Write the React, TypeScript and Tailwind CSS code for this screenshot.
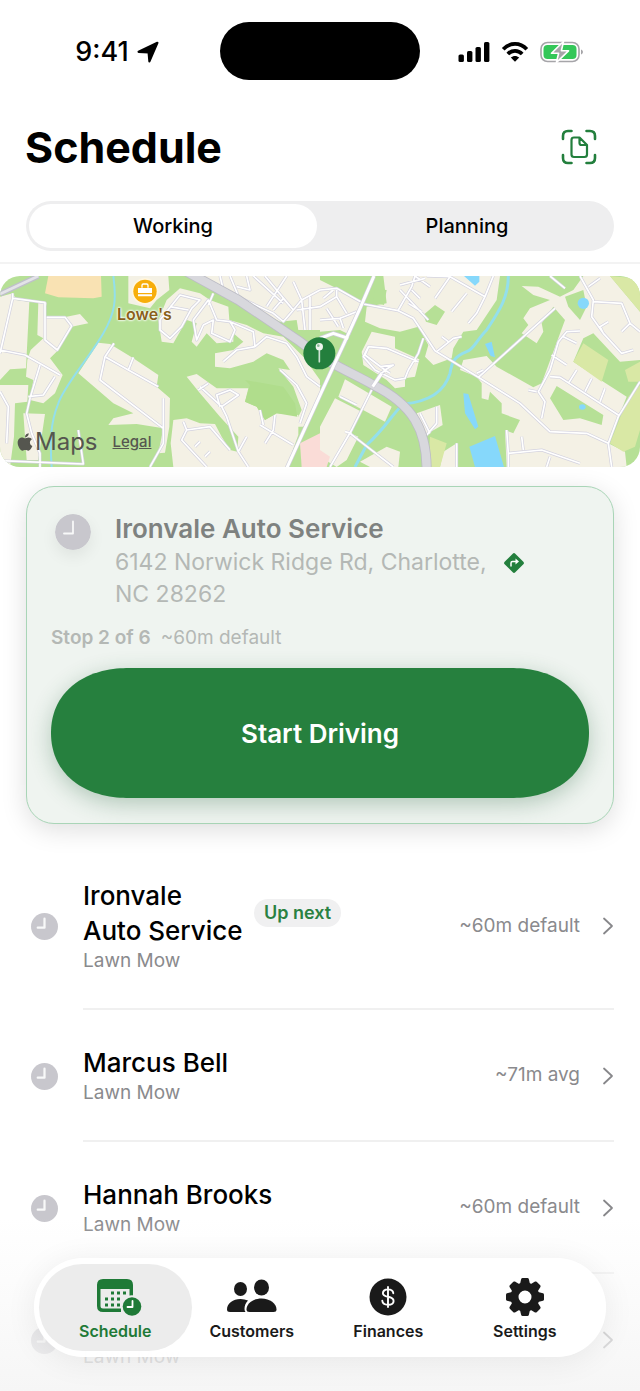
import { FaApple } from "react-icons/fa";

const stops = [
  { id: 2, name: "Ironvale Auto Service", job: "Lawn Mow", time: "~60m default", next: true },
  { id: 3, name: "Marcus Bell", job: "Lawn Mow", time: "~71m avg" },
  { id: 4, name: "Hannah Brooks", job: "Lawn Mow", time: "~60m default" },
  { id: 5, name: "", job: "Lawn Mow", time: "" },
];

function ClockIcon({ className, stroke }: { className: string; stroke: number }) {
  return (
    <svg viewBox="0 0 36 36" className={className} aria-hidden="true">
      <circle cx="18" cy="18" r="18" fill="#c8c7cd" />
      <path d="M18 7.5V19.5H9" fill="none" stroke="#f8f9f9" strokeWidth={stroke} strokeLinecap="round" strokeLinejoin="round" />
    </svg>
  );
}

function StatusBar() {
  return (
    <div className="grid h-20 grid-cols-[1fr_auto_1fr] items-center pt-[22px]">
      <div className="flex items-center justify-center gap-2 pt-[2px] pl-[14px]">
        <span className="text-[27px] font-medium leading-8">9:41</span>
        <svg viewBox="0 0 22 22" className="size-[22px]" aria-hidden="true">
          <path d="M20.4 1.8 12.4 20.4 11.6 11.4 1.6 10.8Z" stroke="#000" strokeWidth="2.2" strokeLinejoin="round" />
        </svg>
      </div>
      <div className="h-[58px] w-[200px] rounded-full bg-black" />
      <div className="flex items-center justify-center gap-[11px] pt-[2px] pr-[18px]">
        <svg viewBox="0 0 32 20" className="h-5 w-8" aria-hidden="true">
          <rect x="0.5" y="12.5" width="5.4" height="7.5" rx="1.6" />
          <rect x="9" y="9" width="5.4" height="11" rx="1.6" />
          <rect x="17.5" y="5" width="5.4" height="15" rx="1.6" />
          <rect x="26" y="0" width="5.4" height="20" rx="1.6" />
        </svg>
        <svg viewBox="0 0 28 20" className="h-5 w-[28px]" fill="none" stroke="#000" aria-hidden="true">
          <path d="M2.2 7.3C9 .1 19 .1 25.8 7.3" strokeWidth="3.8" />
          <path d="M6.8 12C11 7.8 17 7.8 21.2 12" strokeWidth="3.8" />
          <path d="M14 19.8 9.8 15.6C12.2 13.4 15.8 13.4 18.2 15.6Z" fill="#000" stroke="none" />
        </svg>
        <svg viewBox="0 0 44 22" className="h-[22px] w-11" aria-hidden="true">
          <rect x="1" y="1.5" width="38" height="19" rx="6.5" fill="none" stroke="#a6a5a9" strokeWidth="1.6" />
          <rect x="3.5" y="4" width="33" height="14" rx="4" fill="#34c759" />
          <path d="M41 8.5C43.6 9.2 43.6 12.8 41 13.5Z" fill="#a6a5a9" />
          <path d="M23.5 0.5 11.5 12.2H18.6L16.4 21.5 28.5 9.8H21.4Z" fill="#a6a5a9" stroke="#fff" strokeWidth="1.6" strokeLinejoin="round" />
        </svg>
      </div>
    </div>
  );
}

const creamWest = [
  "M0 80L38 70L50 90L88 95L78 295L30 298L0 330Z",
  "M0 345L85 345L82 395L45 400L42 500L30 591H0Z",
  "M70 430L135 432L125 500L115 570H80Z",
  "M115 95L140 98L132 140L200 140L240 132L265 160L215 170L175 240L150 265L188 315L165 370L130 400L90 390L100 330L78 320L82 270L92 240L130 205L112 195Z",
  "M385 18H505L508 60L470 90L450 115L385 100Z",
  "M475 150L500 90L540 55L600 70L630 90L685 110L688 150L740 165L790 190L850 200L910 260L960 330V380L910 470H880L905 420L880 350L835 295L870 300L850 270L800 250L760 275L690 295L645 290V250L700 240L730 215L700 190V215L650 220L620 190L590 230L575 215L590 160L560 150L520 220L485 215Z",
  "M295 218L330 222L400 265L475 315L470 350L510 385L508 470L495 548L475 550L490 475L410 462L325 465L340 445L400 430L340 400L235 310Z",
  "M560 320L590 312L650 355H745L735 395L770 410L795 450L830 430L895 435V495L860 591H520L512 520L520 450L560 445L600 460L645 462L665 500L690 540L712 545L715 500L660 440L600 370Z",
  "M570 18H960V180H895L890 150L840 155L700 85Z",
];

const creamEast = [
  "M0 30L60 60L130 95L90 195L60 180L0 185Z",
  "M190 18H540L530 90L470 180L430 185L400 235L395 265L340 285L315 260L325 225L295 170L240 185L180 175L135 155L140 110L200 100Z",
  "M155 185L225 200V235L298 268L285 320L255 325V350L225 355L200 330L130 285L125 245Z",
  "M75 328L215 410L195 455L55 380Z",
  "M45 385L125 425L90 490L115 500L80 570L50 591L0 560V470Z",
  "M430 270L500 258L530 290L640 352L665 340L735 150L700 110L665 160L670 185L650 220L605 190L625 165L610 145L630 115L690 90L640 75L605 48L655 50L720 80L760 60L790 18H870L960 125V270L900 275L820 190L790 205L760 275L850 335L920 380L865 520L915 545L920 591H560L555 480L580 490L600 450L545 430V400L510 365L505 390L485 385V340L470 320L420 300Z",
  "M290 430L360 405L368 465L315 495Z",
  "M370 545L410 520V591H360Z",
  "M120 575L200 530L240 545L235 591H150Z",
];

const roadsWest = [
  "M0 250L38 85V70M40 85L135 98V210L172 240L215 168L195 142H140M0 240L75 255L180 315M120 285L90 385L80 430L95 490L120 550V591",
  "M0 365L25 410L20 520M85 380L130 375L165 320M0 572L250 582L235 480",
  "M342 220L315 260L300 330L490 475M318 262L385 300L475 350M385 300L400 262M490 385V520L450 591",
  "M480 150L540 75L600 90L575 115L545 170L510 205L480 180ZM510 110L565 120M625 90L580 150L590 210L610 165L640 150L635 190L690 215L705 180L690 155L650 150ZM640 70L625 105",
  "M690 155L760 185L765 230L710 240L670 275M765 230L800 200L860 220L890 260L920 320L960 350M890 345L920 400L900 460M840 300L890 345",
  "M595 360L625 340M600 350L665 410L680 440L715 545M660 410L650 375L690 360L715 375L665 410M690 540L630 470L560 480L545 510L620 591M560 480L550 455M585 530L600 515M615 560L630 545M715 545L745 591M715 545L740 500M780 465L880 525M795 520L820 480L825 435M780 420L790 465",
  "M660 18L670 60L820 130L850 155L880 120L905 90L960 60M690 18L720 90M740 18L750 60L710 50M760 18L850 100M860 18L800 110M795 18L880 120M890 120L960 110M905 90L915 180M880 35L905 90M930 80V180M820 120L850 85L880 120",
];

const roadsEast = [
  "M0 60L50 55L130 100M10 85L40 60M0 110L50 80L80 130M0 150L60 145L110 125M50 80V60M60 145L70 175M20 115L55 170",
  "M130 102L235 122L280 145L345 242L475 322L600 400L690 485L800 490L865 520L875 591M865 520L895 440L960 335",
  "M235 120L275 50L285 18M265 100L305 125M275 60L300 85M285 18L330 50M240 45L315 25M320 18L390 20L495 80L520 18M390 20L345 85M495 80L470 130L445 160M440 70L395 125M325 150L240 60",
  "M310 205L295 250L265 300L255 325L225 330L165 300L130 260L145 230L200 235L295 275M145 232L135 255L195 300L220 285L180 290M175 320L195 300L210 310M350 245L400 205L425 200M365 200L385 215",
  "M160 350L95 480L30 591M90 490L220 591M75 485L95 490M60 380L110 405M300 430L330 490M350 410V460L320 495",
  "M475 322L705 115M470 310L490 300M665 445L675 395L655 365L690 300L715 215L740 185L780 183M730 200L770 220M695 255L740 285M690 320L720 322L895 435M770 300L745 340M815 325L795 365M855 355L840 395M650 365L625 360",
  "M780 18L820 90L815 140L850 190L905 250L940 240M820 95L905 100L930 160L960 185M850 190L840 170L865 155M930 160L905 185M805 50L840 25M690 18L735 55",
  "M560 480L565 550L665 540L780 580M605 500L610 540M565 550V591M690 560L680 591M410 520V591",
];

function RouteMap() {
  return (
    <svg viewBox="0 18 1920 573" preserveAspectRatio="xMidYMid slice" className="block h-full w-full" aria-hidden="true">
      <rect y="18" width="1920" height="573" fill="#b6e096" />
      <g fill="#f4f1e5">
        {creamWest.map((d) => <path key={d} d={d} />)}
      </g>
      <path d="M145 18H303L305 80L280 85L175 82L135 70Z" fill="#f9e2b3" />
      <path d="M735 395L750 345L735 330L850 350L885 400L892 440L830 430L795 450L770 410Z" fill="#b0dd8c" />
      <path d="M900 520L960 490V591H905Z" fill="#fadcd7" />
      <g transform="translate(960 0)">
        <g fill="#f4f1e5">
          {creamEast.map((d) => <path key={d} d={d} />)}
        </g>
        <path d="M0 540L30 560L20 591H0Z" fill="#fadcd7" />
        <path d="M165 57L200 60L192 105L160 98ZM310 135L345 105L375 125L350 165L318 155ZM710 348L850 435L845 465L780 445L730 450L690 385Z" fill="#b6e096" />
        <path d="M735 80L790 60L800 110L780 150L745 110Z" fill="#b6e096" />
        <path d="M870 18L945 25L960 60V125ZM790 220L865 270L845 335L760 275ZM960 345L925 380L870 520L910 545L945 530L960 480ZM915 300L960 275V335L925 335ZM330 500L380 520L360 591H325Z" fill="#d9e8a5" />
        <path d="M565 18C565 80 540 120 500 180C470 210 460 240 440 245C400 260 395 280 390 310C375 360 330 395 250 402C210 440 200 470 140 525L105 591" fill="none" stroke="#93dfec" strokeWidth="9" />
        <g fill="#86d8fb">
          <path d="M432 18H478V35L465 47ZM495 222L515 215L525 262L512 258ZM430 370L445 372L475 470L465 478L435 430ZM448 530L525 498L552 591H465Z" />
          <circle cx="790" cy="100" r="17" />
          <ellipse cx="787" cy="411" rx="10" ry="8" />
        </g>
      </g>
      <path d="M340 18C350 90 345 130 310 190C270 260 190 350 175 400C150 460 150 520 155 591" fill="none" stroke="#93dfec" strokeWidth="6" />
      <g fill="none" strokeLinejoin="round">
        <path d={roadsWest.join("")} stroke="#d3d2df" strokeWidth="9" />
        <path d={roadsEast.join("")} stroke="#d3d2df" strokeWidth="9" transform="translate(960 0)" />
        <path d={roadsWest.join("")} stroke="#fff" strokeWidth="5" />
        <path d={roadsEast.join("")} stroke="#fff" strokeWidth="5" transform="translate(960 0)" />
        <path d="M0 72L115 18" stroke="#bfc0c9" strokeWidth="16" />
        <path d="M0 72L115 18" stroke="#e3e3e8" strokeWidth="8" />
        <path d="M560 5L715 90L900 215C990 285 1060 310 1120 345C1240 405 1280 480 1280 600" stroke="#bcbcc5" strokeWidth="30" />
        <path d="M560 5L715 90L900 215C990 285 1060 310 1120 345C1240 405 1280 480 1280 600" stroke="#d8d8dd" strokeWidth="25" />
        <path d="M1122 18L1080 115L1030 225L965 365L860 595M1118 350L1145 310M960 205L1000 190L1045 205" stroke="#cfceda" strokeWidth="13" />
        <path d="M1122 18L1080 115L1030 225L965 365L860 595M1118 350L1145 310M960 205L1000 190L1045 205" stroke="#fff" strokeWidth="9" />
      </g>
      <circle cx="435" cy="64" r="40" fill="#fff6df" />
      <circle cx="435" cy="64" r="35" fill="#f7ae0b" />
      <path d="M414 54H456V69H414ZM414 73H456V79H414Z" fill="#fff" />
      <path d="M426 53V46Q426 42 430 42H440Q444 42 444 46V53" fill="none" stroke="#fff" strokeWidth="4" />
      <circle cx="958" cy="250" r="48" fill="#237f3d" />
      <path d="M958 236V275" stroke="#cfe3d4" strokeWidth="5" strokeLinecap="round" />
      <circle cx="958" cy="230" r="11" fill="#eef5ef" />
      <circle cx="955" cy="227" r="4" fill="#8dba9a" />
    </svg>
  );
}

function ScheduleIcon() {
  return (
    <svg viewBox="-7 0 53 38" className="h-[38px] w-[53px]" fill="#1f7a37" aria-hidden="true">
      <path d="M7 1H31Q37 1 37 7V22H33.5V11H4.5V28Q4.5 30.5 7 30.5H25V34H7Q1 34 1 28V7Q1 1 7 1Z" />
      <path d="M15 13.5h3v3h-3zM21 13.5h3v3h-3zM27 13.5h3v3h-3zM9 19.5h3v3h-3zM15 19.5h3v3h-3zM21 19.5h3v3h-3zM9 25.5h3v3h-3zM15 25.5h3v3h-3zM21 25.5h3v3h-3z" />
      <circle cx="36" cy="28.5" r="11.2" fill="#ececec" />
      <circle cx="36" cy="28.5" r="9.3" />
      <path d="M36.5 23V29H31.5" fill="none" stroke="#fff" strokeWidth="1.8" strokeLinecap="round" strokeLinejoin="round" />
    </svg>
  );
}

function CustomersIcon() {
  return (
    <svg viewBox="0 0 50 38" className="h-[38px] w-[50px]" fill="#1a1a1a" aria-hidden="true">
      <ellipse cx="13.5" cy="11" rx="6.5" ry="7" />
      <path d="M3 34Q0 34 0 31.5C0 25.5 6 21 13.5 21Q17.5 21 21 22.5C18.5 25 17.5 28 17.5 31Q17.5 33 18.5 34Z" />
      <ellipse cx="34.5" cy="9.5" rx="7.5" ry="8" />
      <path d="M22.5 34Q19.5 34 19.5 31.5C19.5 25.5 26 20.5 34.5 20.5S49.5 25.5 49.5 31.5Q49.5 34 46.5 34Z" />
    </svg>
  );
}

function FinancesIcon() {
  return (
    <svg viewBox="0 0 38 38" className="size-[38px]" aria-hidden="true">
      <circle cx="19" cy="19" r="18.5" fill="#1a1a1a" />
      <path d="M24.3 15.2C24 12.7 22 11.4 19 11.4S13.9 12.9 13.9 15.2C13.9 20.3 24.6 17.2 24.6 22.9C24.6 25.3 22.2 26.7 19 26.7S13.5 25.3 13.3 22.7M19 9V29" fill="none" stroke="#fff" strokeWidth="1.9" strokeLinecap="round" />
    </svg>
  );
}

function SettingsIcon() {
  return (
    <svg viewBox="-19 -19 38 38" className="size-[38px]" aria-hidden="true">
      {[0, 45, 90, 135, 180, 225, 270, 315].map((angle) => (
        <path key={angle} d="M-5.5-11L-3.8-18Q-3.5-19-2.5-19H2.5Q3.5-19 3.8-18L5.5-11Z" fill="#1a1a1a" transform={`rotate(${angle})`} />
      ))}
      <circle r="10.5" fill="none" stroke="#1a1a1a" strokeWidth="8" />
    </svg>
  );
}

const tabs = [
  { label: "Schedule", icon: <ScheduleIcon />, active: true },
  { label: "Customers", icon: <CustomersIcon /> },
  { label: "Finances", icon: <FinancesIcon /> },
  { label: "Settings", icon: <SettingsIcon /> },
];

export default function App() {
  return (
    <div className="relative h-screen overflow-hidden bg-white font-['Inter',sans-serif] text-black">
      {/* HEADER */}
      <header className="border-b-2 border-[#f3f3f3] pb-[11px]">
        <StatusBar />
        <div className="mt-10 flex h-[54px] items-center justify-between pr-[43px] pl-[25px]">
          <h1 className="text-[43px] font-bold leading-[54px]">Schedule</h1>
          <button type="button" aria-label="Scan document">
            <svg viewBox="0 0 36 36" className="size-9" fill="none" stroke="#237f3d" strokeWidth="2.6" strokeLinecap="round" strokeLinejoin="round" aria-hidden="true">
              <path d="M2 10V7Q2 2 7 2H10.5M25.5 2H29Q34 2 34 7V10M34 26V29Q34 34 29 34H25.5M10.5 34H7Q2 34 2 29V26" />
              <path d="M13 8.5H18.5L26 16V25.5Q26 28 23.5 28H13Q10.5 28 10.5 25.5V11Q10.5 8.5 13 8.5ZM18.5 8.5V14Q18.5 16 20.5 16H26" strokeWidth="2.2" />
            </svg>
          </button>
        </div>
        <div className="mx-[26px] mt-[27px] flex h-[50px] rounded-full bg-[#eeeeef] text-[20px] font-medium">
          <button type="button" className="m-[3px] flex-1 rounded-full bg-white">Working</button>
          <button type="button" className="m-[3px] flex-1 rounded-full">Planning</button>
        </div>
      </header>

      <main>
        {/* MAP */}
        <section className="relative mt-3 h-[191px] overflow-hidden rounded-[20px]">
          <RouteMap />
          <span className="absolute top-7 left-[117px] text-[16px] font-semibold leading-5 text-[#896019] [text-shadow:0_0_2px_#fff,0_0_2px_#fff,0_0_3px_#fff]">
            Lowe's
          </span>
          <div className="absolute bottom-[9px] left-[15px] flex items-center gap-[15px] text-[#55564f]">
            <span className="flex items-center text-[24px] leading-8">
              <FaApple className="size-5" />
              Maps
            </span>
            <a href="#legal" className="text-[15px] font-medium leading-5 underline">Legal</a>
          </div>
        </section>

        {/* CURRENT STOP */}
        <section className="mx-[26px] mt-[19px] rounded-[28px] border border-[#a9d5b7] bg-[#eff4f0] px-6 py-[25px] shadow-[0_6px_26px_rgba(0,0,0,0.13)]">
          <div className="flex gap-6 pl-1">
            <ClockIcon className="mt-[2px] size-9 rounded-full shadow-[0_6px_16px_rgba(0,0,0,0.07)]" stroke={1.8} />
            <div>
              <h2 className="text-[26px] font-semibold leading-[34px] text-[#7e8280]">Ironvale Auto Service</h2>
              <div className="flex items-start gap-4 text-[23px] leading-8 text-[#b4b8b5]">
                <p>6142 Norwick Ridge Rd, Charlotte,<br />NC 28262</p>
                <button type="button" aria-label="Directions" className="mt-[6px]">
                  <svg viewBox="0 0 22 22" className="size-[22px]" aria-hidden="true">
                    <rect x="3.5" y="3.5" width="15" height="15" rx="1.8" fill="#237f3d" transform="rotate(45 11 11)" />
                    <path d="M8 14.5V11Q8 9.5 9.5 9.5H13" fill="none" stroke="#fff" strokeWidth="1.5" />
                    <path d="M12.5 6.5L16 9.5L12.5 12.5Z" fill="#fff" />
                  </svg>
                </button>
              </div>
            </div>
          </div>
          <p className="mt-4 text-[19px] leading-6 text-[#b4b8b5]">
            <span className="mr-[10px] font-semibold">Stop 2 of 6</span>
            ~60m default
          </p>
          <button type="button" className="mt-[18px] h-[130px] w-full rounded-[78px/65px] bg-[#26803e] text-[26px] font-semibold text-white shadow-[0_6px_22px_rgba(38,100,60,0.3)] [corner-shape:superellipse(1.12)]">
            Start Driving
          </button>
        </section>

        {/* STOPS */}
        <ul className="mt-[19px] pr-[26px] pl-[31px]">
          {stops.map((stop) => (
            <li key={stop.id}>
              <button type="button" className="flex w-full items-center gap-[25px] text-left">
                <ClockIcon className="size-[27px] shrink-0" stroke={3} />
                <span className="flex flex-1 items-center border-b-2 border-[#f0f0f0] pt-[35px] pb-[34px]">
                  <span className="flex-1">
                    <span className="flex min-h-[35px] items-center gap-[10px]">
                      <span className={stop.next ? "max-w-[161px] text-[26px] font-medium leading-[35px]" : "text-[26px] font-medium leading-[35px]"}>
                        {stop.name}
                      </span>
                      {stop.next && (
                        <span className="rounded-full bg-[#f0f0f1] px-[10px] text-[18px] font-semibold leading-7 text-[#2a8142]">Up next</span>
                      )}
                    </span>
                    <span className="block text-[19px] leading-[26px] text-[#8a8a8d]">{stop.job}</span>
                  </span>
                  <span className="text-[19px] text-[#8a8a8d]">{stop.time}</span>
                  <svg viewBox="0 0 12 18" className="ml-[22px] h-[18px] w-3" fill="none" stroke="#87878a" strokeWidth="1.8" strokeLinecap="round" strokeLinejoin="round" aria-hidden="true">
                    <path d="M2 1.5L10 9L2 16.5" />
                  </svg>
                </span>
              </button>
            </li>
          ))}
        </ul>
      </main>

      {/* TAB BAR */}
      <div className="absolute inset-x-0 bottom-0 bg-gradient-to-b from-[#f7f7f7]/0 via-[#f8f8f8]/60 via-50% to-[#f5f5f5]/90 px-[34px] pt-10 pb-[34px]">
        <nav className="grid h-[99px] grid-cols-4 rounded-full bg-white/97 px-[13px] py-[6px] shadow-[0_4px_32px_rgba(0,0,0,0.07)]">
          {tabs.map((tab) => (
            <button
              key={tab.label}
              type="button"
              className={tab.active
                ? "-mx-2 flex flex-col items-center justify-center gap-[3px] rounded-full bg-[#ececec] pt-[5px] text-[#1f7a37]"
                : "-mx-2 flex flex-col items-center justify-center gap-[3px] pt-[5px] text-[#1a1a1a]"}
            >
              {tab.icon}
              <span className="text-[16px] font-semibold leading-6">{tab.label}</span>
            </button>
          ))}
        </nav>
      </div>
    </div>
  );
}
